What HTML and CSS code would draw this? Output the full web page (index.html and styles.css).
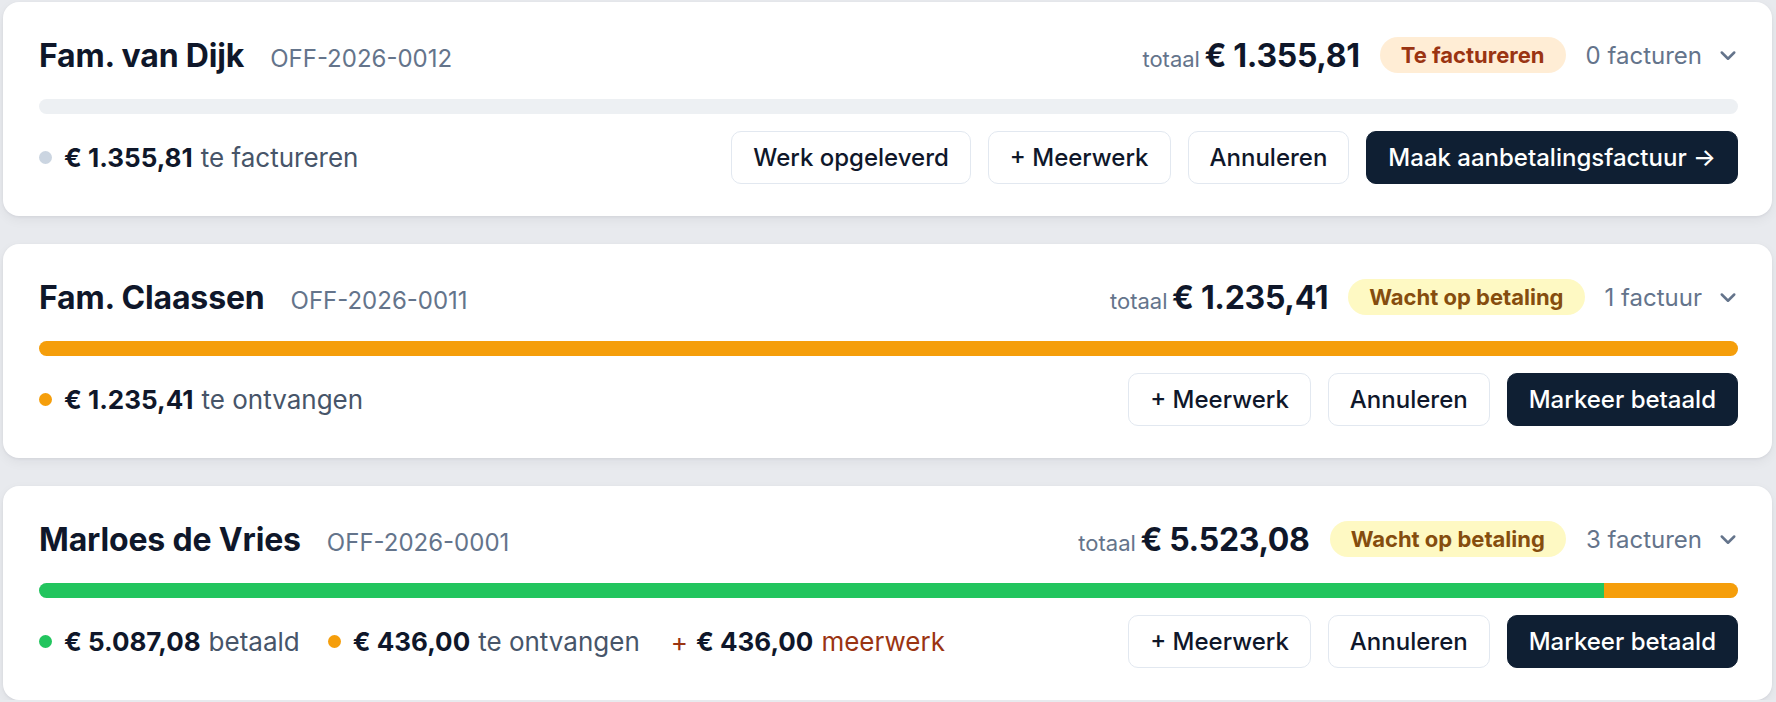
FILE: index.html
```html
<!DOCTYPE html>
<html lang="nl">

<head>
    <meta charset="UTF-8">
    <meta name="viewport" content="width=device-width, initial-scale=1.0">
    <title>Offertes</title>
    <link rel="stylesheet" href="styles.css">
</head>

<body>
    <div class="list">
        <!-- Fam. van Dijk -->
        <div class="card">
            <div class="card-head">
                <div class="who">
                    <h2>Fam. van Dijk</h2>
                    <span class="ref">OFF-2026-0012</span>
                </div>
                <div class="meta">
                    <div class="total"><span class="total-label">totaal</span> <span class="total-amount">€ 1.355,81</span></div>
                    <span class="badge badge-orange">Te factureren</span>
                    <span class="count">0 facturen
                        <svg class="chevron" viewBox="0 0 16 16" fill="none" stroke="currentColor" stroke-width="2" stroke-linecap="round" stroke-linejoin="round"><path d="M3 6l5 5 5-5"/></svg>
                    </span>
                </div>
            </div>
            <div class="bar"></div>
            <div class="card-foot">
                <div class="summary">
                    <span class="item"><i class="dot dot-gray"></i><b>€ 1.355,81</b> te factureren</span>
                </div>
                <div class="actions">
                    <button class="btn">Werk opgeleverd</button>
                    <button class="btn">+ Meerwerk</button>
                    <button class="btn">Annuleren</button>
                    <button class="btn btn-dark">Maak aanbetalingsfactuur →</button>
                </div>
            </div>
        </div>

        <!-- Fam. Claassen -->
        <div class="card">
            <div class="card-head">
                <div class="who">
                    <h2>Fam. Claassen</h2>
                    <span class="ref">OFF-2026-0011</span>
                </div>
                <div class="meta">
                    <div class="total"><span class="total-label">totaal</span> <span class="total-amount">€ 1.235,41</span></div>
                    <span class="badge badge-yellow">Wacht op betaling</span>
                    <span class="count">1 factuur
                        <svg class="chevron" viewBox="0 0 16 16" fill="none" stroke="currentColor" stroke-width="2" stroke-linecap="round" stroke-linejoin="round"><path d="M3 6l5 5 5-5"/></svg>
                    </span>
                </div>
            </div>
            <div class="bar">
                <div class="fill fill-orange" style="width: 100%"></div>
            </div>
            <div class="card-foot">
                <div class="summary">
                    <span class="item"><i class="dot dot-orange"></i><b>€ 1.235,41</b> te ontvangen</span>
                </div>
                <div class="actions">
                    <button class="btn">+ Meerwerk</button>
                    <button class="btn">Annuleren</button>
                    <button class="btn btn-dark">Markeer betaald</button>
                </div>
            </div>
        </div>

        <!-- Marloes de Vries -->
        <div class="card">
            <div class="card-head">
                <div class="who">
                    <h2>Marloes de Vries</h2>
                    <span class="ref">OFF-2026-0001</span>
                </div>
                <div class="meta">
                    <div class="total"><span class="total-label">totaal</span> <span class="total-amount">€ 5.523,08</span></div>
                    <span class="badge badge-yellow">Wacht op betaling</span>
                    <span class="count">3 facturen
                        <svg class="chevron" viewBox="0 0 16 16" fill="none" stroke="currentColor" stroke-width="2" stroke-linecap="round" stroke-linejoin="round"><path d="M3 6l5 5 5-5"/></svg>
                    </span>
                </div>
            </div>
            <div class="bar">
                <div class="fill fill-green" style="width: 92.1%"></div>
                <div class="fill fill-orange" style="width: 7.9%"></div>
            </div>
            <div class="card-foot">
                <div class="summary">
                    <span class="item"><i class="dot dot-green"></i><b>€ 5.087,08</b> betaald</span>
                    <span class="item"><i class="dot dot-orange"></i><b>€ 436,00</b> te ontvangen</span>
                    <span class="item extra"><span class="plus">+</span> <b>€ 436,00</b> meerwerk</span>
                </div>
                <div class="actions">
                    <button class="btn">+ Meerwerk</button>
                    <button class="btn">Annuleren</button>
                    <button class="btn btn-dark">Markeer betaald</button>
                </div>
            </div>
        </div>
    </div>
</body>

</html>
```

FILE: styles.css
```css
body {
    margin: 0;
    background-color: #e8eaee;
    font-family: Inter, "Noto Sans", sans-serif;
    color: #0f172a;
}

.list {
    display: flex;
    flex-direction: column;
    gap: 28px;
    padding: 2px 4px 0 3px;
}

.card {
    background: #fff;
    border-radius: 16px;
    padding: 34px 34px 32px 36px;
    box-shadow: 0 1px 3px rgba(15, 23, 42, 0.06), 0 4px 12px rgba(15, 23, 42, 0.05);
}

.card-head {
    display: flex;
    justify-content: space-between;
    align-items: center;
    height: 38px;
}

.who {
    display: flex;
    align-items: baseline;
    gap: 26px;
}

.who h2 {
    margin: 0;
    font-size: 32px;
    font-weight: 700;
    letter-spacing: -0.005em;
}

.ref {
    font-size: 24px;
    color: #64748b;
}

.meta {
    display: flex;
    align-items: center;
    gap: 20px;
}

.total {
    white-space: nowrap;
}

.total-label {
    font-size: 22px;
    color: #64748b;
}

.total-amount {
    font-size: 32px;
    font-weight: 700;
    letter-spacing: -0.01em;
}

.badge {
    display: inline-block;
    height: 36px;
    line-height: 36px;
    padding: 0 21px;
    border-radius: 18px;
    font-size: 22px;
    font-weight: 700;
}

.badge-orange {
    background: #ffedd5;
    color: #9a3412;
}

.badge-yellow {
    background: #fef9c3;
    color: #854d0e;
}

.count {
    display: flex;
    align-items: center;
    gap: 16px;
    font-size: 24px;
    color: #64748b;
}

.chevron {
    width: 20px;
    height: 20px;
    color: #64748b;
}

.bar {
    display: flex;
    height: 15px;
    margin-top: 25px;
    border-radius: 8px;
    background: #edf0f3;
    overflow: hidden;
}

.fill-green {
    background: #22c55e;
}

.fill-orange {
    background: #f59e0b;
}

.card-foot {
    display: flex;
    justify-content: space-between;
    align-items: center;
    margin-top: 17px;
}

.summary {
    display: flex;
    align-items: center;
    gap: 28px;
    font-size: 26px;
    color: #475569;
}

.summary b {
    color: #0f172a;
    font-weight: 700;
}

.item {
    display: flex;
    align-items: center;
    gap: 8px;
}

.dot {
    width: 13px;
    height: 13px;
    border-radius: 50%;
    margin-right: 4px;
}

.dot-gray {
    background: #cbd5e1;
}

.dot-orange {
    background: #f59e0b;
}

.dot-green {
    background: #22c55e;
}

.extra {
    color: #9a3412;
    margin-left: 3px;
}

.actions {
    display: flex;
    gap: 17px;
}

.btn {
    height: 53px;
    padding: 0 21px;
    border: 1.5px solid #e2e8f0;
    border-radius: 10px;
    background: #fff;
    color: #0f172a;
    font-family: inherit;
    font-size: 24px;
    font-weight: 500;
    cursor: pointer;
}

.btn-dark {
    background: #0f1f33;
    border-color: #0f1f33;
    color: #fff;
}
```
